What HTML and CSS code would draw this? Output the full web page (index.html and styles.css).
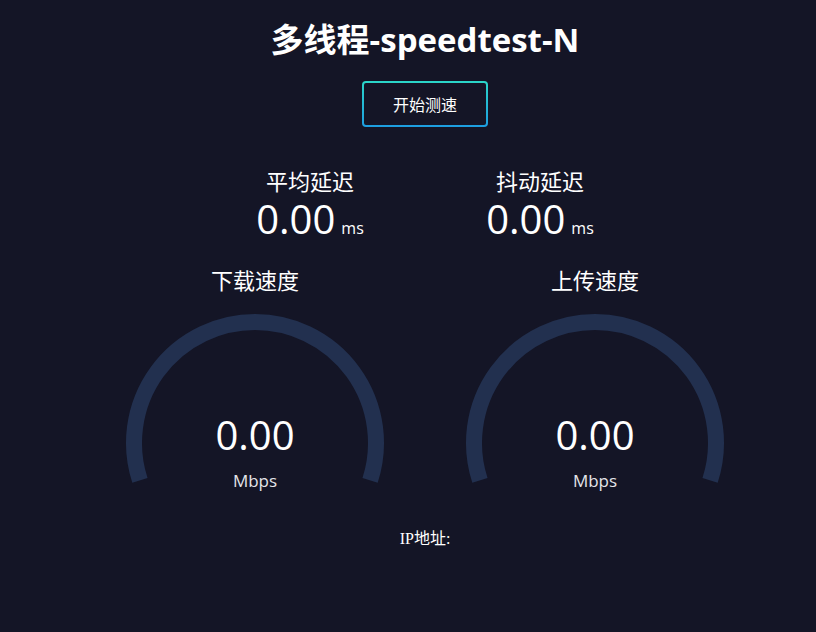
FILE: index.html
```html
<!DOCTYPE html>
<html lang="zh-CN">
<head>
  <meta charset="UTF-8">
  <title>多线程-speedtest-N</title>
  <link rel="stylesheet" href="styles.css">
</head>
<body>
<div class="page">
  <h1>多线程-speedtest-N</h1>

  <button class="start-btn">开始测速</button>

  <div class="ping-row">
    <div class="ping-item">
      <div class="label">平均延迟</div>
      <div class="value">0.00<span class="unit">ms</span></div>
    </div>
    <div class="ping-item">
      <div class="label">抖动延迟</div>
      <div class="value">0.00<span class="unit">ms</span></div>
    </div>
  </div>

  <div class="gauge-row">
    <div class="gauge">
      <div class="label">下载速度</div>
      <svg class="meter" width="260" height="180" viewBox="0 0 260 180">
        <path d="M 14.92 166.39 A 121 121 0 1 1 245.08 166.39" />
        <text class="meter-num" x="130" y="136">0.00</text>
        <text class="meter-unit" x="130" y="173">Mbps</text>
      </svg>
    </div>
    <div class="gauge">
      <div class="label">上传速度</div>
      <svg class="meter" width="260" height="180" viewBox="0 0 260 180">
        <path d="M 14.92 166.39 A 121 121 0 1 1 245.08 166.39" />
        <text class="meter-num" x="130" y="136">0.00</text>
        <text class="meter-unit" x="130" y="173">Mbps</text>
      </svg>
    </div>
  </div>

  <div class="ip">IP地址:</div>
</div>
</body>
</html>
```

FILE: styles.css
```css
body {
  margin: 0;
  background: #141526;
  color: #fff;
  font-family: "Open Sans", "Noto Sans CJK SC", sans-serif;
}

.page {
  padding-left: 34px;
  display: flex;
  flex-direction: column;
  align-items: center;
  text-align: center;
}

h1 {
  font-size: 33px;
  font-weight: bold;
  line-height: 38px;
  margin: 21px 0 0;
}

.start-btn {
  margin-top: 22px;
  width: 126px;
  height: 46px;
  font-family: "Open Sans", "Noto Sans CJK SC", sans-serif;
  font-size: 16px;
  color: #fff;
  border: 2px solid transparent;
  border-radius: 4px;
  background: linear-gradient(#141526, #141526) padding-box,
              linear-gradient(to bottom, #2bd6c8, #1d9de0) border-box;
  cursor: pointer;
}

.label {
  font-size: 22px;
  line-height: 24px;
}

.ping-row {
  display: flex;
  margin-top: 42px;
}

.ping-item {
  width: 230px;
}

.value {
  margin-top: 5px;
  font-size: 40px;
  line-height: 42px;
}

.unit {
  font-size: 16px;
  margin-left: 6px;
}

.gauge-row {
  display: flex;
  margin-top: 19px;
}

.gauge {
  width: 340px;
  display: flex;
  flex-direction: column;
  align-items: center;
}

.meter {
  display: block;
  margin-top: 22px;
}

.meter path {
  fill: none;
  stroke: #22304f;
  stroke-width: 16;
}

.meter text {
  text-anchor: middle;
  font-family: "Open Sans", sans-serif;
}

.meter-num {
  font-size: 40px;
  fill: #fff;
}

.meter-unit {
  font-size: 17px;
  fill: #e4e5ea;
}

.ip {
  margin-top: 31px;
  font-family: "Liberation Serif", "Noto Sans CJK SC", serif;
  font-size: 16px;
}
```
